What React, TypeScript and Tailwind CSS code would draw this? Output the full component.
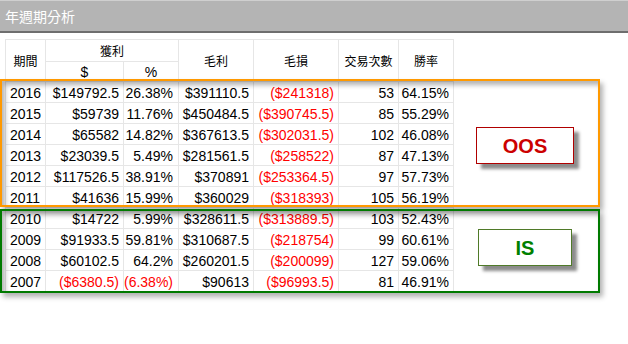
import React from "react";

type Row = [string, string, string, string, string, string, string];

const rows: Row[] = [
  ["2016", "$149792.5", "26.38%", "$391110.5", "($241318)", "53", "64.15%"],
  ["2015", "$59739", "11.76%", "$450484.5", "($390745.5)", "85", "55.29%"],
  ["2014", "$65582", "14.82%", "$367613.5", "($302031.5)", "102", "46.08%"],
  ["2013", "$23039.5", "5.49%", "$281561.5", "($258522)", "87", "47.13%"],
  ["2012", "$117526.5", "38.91%", "$370891", "($253364.5)", "97", "57.73%"],
  ["2011", "$41636", "15.99%", "$360029", "($318393)", "105", "56.19%"],
  ["2010", "$14722", "5.99%", "$328611.5", "($313889.5)", "103", "52.43%"],
  ["2009", "$91933.5", "59.81%", "$310687.5", "($218754)", "99", "60.61%"],
  ["2008", "$60102.5", "64.2%", "$260201.5", "($200099)", "127", "59.06%"],
  ["2007", "($6380.5)", "(6.38%)", "$90613", "($96993.5)", "81", "46.91%"],
];

const cjk = "font-['Noto_Sans_CJK_TC',sans-serif]";

const HeadCell = ({ label, span }: { label: string; span: string }) => (
  <div
    className={`${span} ${cjk} flex items-center justify-center border-r border-b border-[#e6e6e6] text-[12px] text-black`}
  >
    {label}
  </div>
);

const App: React.FC = () => {
  return (
    <div className="relative w-[628px] h-[344px] overflow-hidden bg-white font-['Liberation_Sans',Arial,sans-serif]">
      {/* title bar */}
      <div
        className={`h-[33px] border-t border-[#cfcfcf] border-b-2 border-b-[#6e6e6e] bg-[#b4b4b4] px-[5px] text-[14px] leading-[30px] text-white ${cjk}`}
      >
        年週期分析
      </div>

      {/* table */}
      <div className="ml-[5px] mt-[6px] grid w-[449px] grid-cols-[40px_78px_55px_75px_85px_60px_55px] grid-rows-[22px_20px_repeat(10,21px)] border-l border-t border-[#e6e6e6] text-[14px] text-black">
        <HeadCell label="期間" span="row-span-2" />
        <HeadCell label="獲利" span="col-span-2" />
        <HeadCell label="毛利" span="row-span-2" />
        <HeadCell label="毛損" span="row-span-2" />
        <HeadCell label="交易次數" span="row-span-2" />
        <HeadCell label="勝率" span="row-span-2" />
        <div className="flex items-center justify-center border-r border-b border-[#e6e6e6] pt-[1px]">$</div>
        <div className="flex items-center justify-center border-r border-b border-[#e6e6e6] pt-[1px]">%</div>

        {rows.map((r) =>
          r.map((v, i) => (
            <div
              key={r[0] + i}
              className={`whitespace-nowrap border-r border-b border-[#e6e6e6] pt-[2px] leading-[19px] ${
                i === 0 ? "pl-[4px] text-left" : i === 2 ? "pr-[5px] text-right" : "pr-[4px] text-right"
              } ${v.startsWith("(") ? "text-[#ff0000]" : ""}`}
            >
              {v}
            </div>
          ))
        )}
      </div>

      {/* OOS group frame */}
      <div className="absolute left-0 top-[79px] h-[128px] w-[600px] border-2 border-[#ff9900] shadow-[3px_4px_5px_rgba(0,0,0,0.3),inset_3px_4px_5px_rgba(0,0,0,0.3)]" />
      <div className="absolute left-[476px] top-[127px] flex h-[37px] w-[98px] items-center justify-center border border-[#b00000] bg-white text-[20px] font-bold text-[#cc0000] shadow-[5px_5px_3px_rgba(0,0,0,0.45)]">
        OOS
      </div>

      {/* IS group frame */}
      <div className="absolute left-0 top-[209px] h-[84px] w-[600px] border-2 border-[#007a00] shadow-[3px_4px_5px_rgba(0,0,0,0.3),inset_3px_4px_5px_rgba(0,0,0,0.3)]" />
      <div className="absolute left-[478px] top-[229px] flex h-[37px] w-[94px] items-center justify-center border border-[#4f7a28] bg-white text-[20px] font-bold text-[#008000] shadow-[5px_5px_3px_rgba(0,0,0,0.45)]">
        IS
      </div>
    </div>
  );
};

export default App;
